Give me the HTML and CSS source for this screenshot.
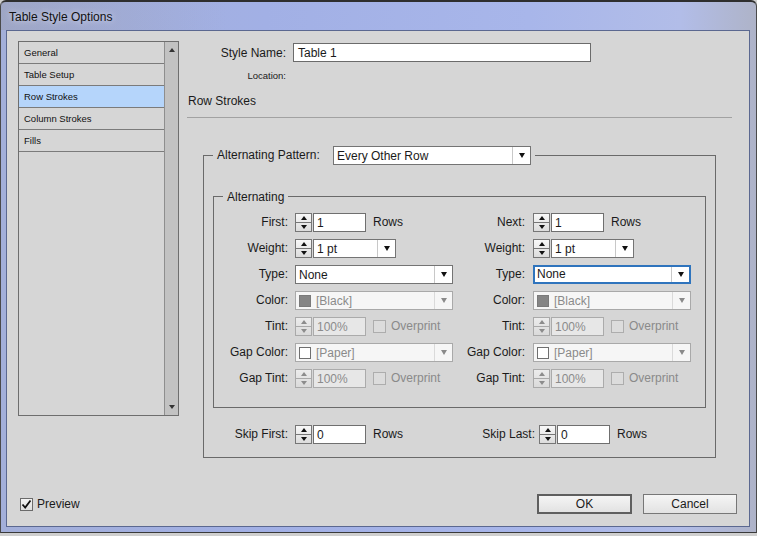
FILE: index.html
```html
<!DOCTYPE html>
<html>
<head>
<meta charset="utf-8">
<title>Table Style Options</title>
<link rel="stylesheet" href="styles.css">
</head>
<body>
<div class="window">
  <div class="titlebar"><span class="title">Table Style Options</span></div>
  <div class="client">
    <div class="main">
      <div class="list">
        <ul class="items">
          <li>General</li>
          <li>Table Setup</li>
          <li class="sel">Row Strokes</li>
          <li>Column Strokes</li>
          <li>Fills</li>
        </ul>
        <div class="scrollbar"><span class="sb-up"></span><span class="sb-down"></span></div>
      </div>
      <div class="panel">
        <div class="name-row">
          <span class="plabel">Style Name:</span>
          <div class="textbox name-box">Table 1</div>
        </div>
        <div class="loc-row"><span class="plabel small">Location:</span></div>
        <div class="section-title">Row Strokes</div>
        <div class="rule"></div>
        <fieldset class="group outer">
          <legend><span class="legend-flex"><span class="pat-label">Alternating Pattern:</span>
            <span class="dd pat-dd"><span class="val">Every Other Row</span><span class="arr"><i class="caret"></i></span></span></span></legend>
          <fieldset class="group inner">
            <legend>Alternating</legend>
            <div class="cols">
              <span class="flabel">First:</span>
              <span class="ctl"><span class="spin"><i class="up"></i><i class="dn"></i></span><span class="tb">1</span><span class="unit">Rows</span></span>
              <span class="flabel r">Next:</span>
              <span class="ctl"><span class="spin"><i class="up"></i><i class="dn"></i></span><span class="tb">1</span><span class="unit">Rows</span></span>

              <span class="flabel">Weight:</span>
              <span class="ctl"><span class="spin"><i class="up"></i><i class="dn"></i></span><span class="dd wdd"><span class="val">1 pt</span><span class="arr"><i class="caret"></i></span></span></span>
              <span class="flabel r">Weight:</span>
              <span class="ctl"><span class="spin"><i class="up"></i><i class="dn"></i></span><span class="dd wdd"><span class="val">1 pt</span><span class="arr"><i class="caret"></i></span></span></span>

              <span class="flabel">Type:</span>
              <span class="ctl"><span class="dd full"><span class="val">None</span><span class="arr"><i class="caret"></i></span></span></span>
              <span class="flabel r">Type:</span>
              <span class="ctl"><span class="dd full focus"><span class="val">None</span><span class="arr"><i class="caret"></i></span></span></span>

              <span class="flabel">Color:</span>
              <span class="ctl"><span class="dd full dis"><span class="val"><i class="sw black"></i>[Black]</span><span class="arr"><i class="caret"></i></span></span></span>
              <span class="flabel r">Color:</span>
              <span class="ctl"><span class="dd full dis"><span class="val"><i class="sw black"></i>[Black]</span><span class="arr"><i class="caret"></i></span></span></span>

              <span class="flabel">Tint:</span>
              <span class="ctl"><span class="spin dis"><i class="up"></i><i class="dn"></i></span><span class="tb dis">100%</span><span class="cb dis"></span><span class="cbl dis">Overprint</span></span>
              <span class="flabel r">Tint:</span>
              <span class="ctl"><span class="spin dis"><i class="up"></i><i class="dn"></i></span><span class="tb dis">100%</span><span class="cb dis"></span><span class="cbl dis">Overprint</span></span>

              <span class="flabel">Gap Color:</span>
              <span class="ctl"><span class="dd full dis"><span class="val"><i class="sw paper"></i>[Paper]</span><span class="arr"><i class="caret"></i></span></span></span>
              <span class="flabel r">Gap Color:</span>
              <span class="ctl"><span class="dd full dis"><span class="val"><i class="sw paper"></i>[Paper]</span><span class="arr"><i class="caret"></i></span></span></span>

              <span class="flabel">Gap Tint:</span>
              <span class="ctl"><span class="spin dis"><i class="up"></i><i class="dn"></i></span><span class="tb dis">100%</span><span class="cb dis"></span><span class="cbl dis">Overprint</span></span>
              <span class="flabel r">Gap Tint:</span>
              <span class="ctl"><span class="spin dis"><i class="up"></i><i class="dn"></i></span><span class="tb dis">100%</span><span class="cb dis"></span><span class="cbl dis">Overprint</span></span>
            </div>
          </fieldset>
          <div class="skip-row">
            <div class="skip-half">
              <span class="flabel">Skip First:</span>
              <span class="spin"><i class="up"></i><i class="dn"></i></span><span class="tb">0</span><span class="unit">Rows</span>
            </div>
            <div class="skip-half">
              <span class="flabel last">Skip Last:</span>
              <span class="spin"><i class="up"></i><i class="dn"></i></span><span class="tb">0</span><span class="unit">Rows</span>
            </div>
          </div>
        </fieldset>
      </div>
    </div>
    <div class="footer">
      <span class="preview-cb">
        <svg width="13" height="13" viewBox="0 0 13 13"><path d="M2.5 6.5 L5.2 9.5 L10.5 2.5" fill="none" stroke="#111" stroke-width="1.8"/></svg>
      </span>
      <span class="preview-label">Preview</span>
      <span class="spacer"></span>
      <span class="btn default">OK</span>
      <span class="btn">Cancel</span>
    </div>
  </div>
</div>
</body>
</html>
```
FILE: styles.css
```css
html, body {
  margin: 0;
  padding: 0;
}
body {
  background: #cfcfcf;
  font-family: "Liberation Sans", Arial, sans-serif;
  font-size: 12px;
  color: #1a1a1a;
}
.window {
  width: 757px;
  height: 533px;
  box-sizing: border-box;
  padding: 0 6px 5px 5px;
  background: linear-gradient(to right, #a3afd9 0%, #a2b0e5 35%, #a8b6ea 70%, #b2bde8 90%, #aeb3c8 100%);
  border-top: 2px solid #2e2e2e;
  border-left: 1px solid #4a4a4a;
  border-right: 1px solid #4a4a4a;
  border-bottom: 1px solid #3a3a3a;
  border-radius: 6px 6px 0 0;
  display: flex;
  flex-direction: column;
}
.titlebar {
  height: 28px;
  display: flex;
  align-items: center;
  padding: 2px 0 0 8px;
  box-sizing: border-box;
  background: linear-gradient(to right, rgba(150, 150, 160, 0.35) 0%, rgba(150, 150, 160, 0) 30%);
  margin: 0 -5px 0 -5px;
}
.title {
  font-family: "Liberation Sans", Arial, sans-serif;
  font-size: 12px;
  color: #111;
  text-shadow: 0 0 6px rgba(240, 240, 250, 0.9);
}
.client {
  height: 498px;
  box-sizing: border-box;
  border: 1px solid #5b6890;
  background: #d6d6d6;
  padding: 10px 16px 12px 11px;
  display: flex;
  flex-direction: column;
}
.main {
  display: flex;
  gap: 8px;
}

/* list */
.list {
  width: 161px;
  height: 375px;
  box-sizing: border-box;
  border: 1px solid #6e6e6e;
  display: flex;
}
.items {
  flex: 1;
  list-style: none;
  margin: 0;
  padding: 0;
}
.items li {
  height: 21px;
  line-height: 21px;
  border-bottom: 1px solid #7b7b7b;
  padding-left: 5px;
  font-size: 9.5px;
  color: #111;
}
.items li.sel {
  background: #b5d5fb;
}
.scrollbar {
  width: 14px;
  box-sizing: border-box;
  border-left: 1px solid #8e8e8e;
  background: #c2c2c2;
  display: flex;
  flex-direction: column;
  justify-content: space-between;
  align-items: center;
  padding: 6px 0 6px 0;
}
.sb-up {
  width: 0;
  height: 0;
  border-left: 3.5px solid transparent;
  border-right: 3.5px solid transparent;
  border-bottom: 4px solid #333;
}
.sb-down {
  width: 0;
  height: 0;
  border-left: 3.5px solid transparent;
  border-right: 3.5px solid transparent;
  border-top: 4px solid #333;
}

/* right panel */
.panel {
  width: 545px;
}
.name-row {
  display: flex;
  align-items: center;
  height: 19px;
  margin-top: 2px;
}
.plabel {
  display: inline-block;
  width: 99px;
  text-align: right;
  padding-top: 1px;
}
.plabel.small {
  font-size: 9.5px;
}
.textbox {
  box-sizing: border-box;
  height: 19px;
  line-height: 18px;
  border: 1px solid #6b6b6b;
  background: #fff;
  padding-left: 4px;
}
.name-box {
  width: 298px;
  margin-left: 7px;
}
.loc-row {
  height: 14px;
  line-height: 14px;
  margin-top: 6px;
}
.section-title {
  margin-top: 12px;
  line-height: 15px;
  padding-left: 1px;
}
.rule {
  margin-top: 8px;
  height: 1px;
  background: #a2a2a2;
}

/* group boxes */
.group {
  border: 1px solid #6a6a6a;
  min-width: 0;
}
.group legend {
  padding: 0 4px;
  margin-left: 9px;
}
.outer {
  margin: 28px 16px 0 16px;
  padding: 0 0 13px 0;
}
.legend-flex {
  display: flex;
  align-items: center;
  height: 19px;
}
.pat-label {
  width: 116px;
}
.pat-dd {
  width: 198px;
}
.pat-dd .val {
  padding-top: 0;
}
.inner {
  margin: 25px 9px 0 9px;
  padding: 9px 0 19px 0;
}
.inner legend {
  line-height: 14px;
}

.cols {
  display: grid;
  grid-template-columns: 81px 158px 80px 158px;
  grid-auto-rows: 19px;
  row-gap: 7px;
}
.flabel {
  text-align: right;
  padding-right: 7px;
  line-height: 19px;
}
.flabel.r {
  padding-right: 8px;
}
.ctl {
  display: flex;
  align-items: center;
  height: 19px;
}

/* spinner */
.spin {
  width: 17px;
  height: 19px;
  box-sizing: border-box;
  border: 1px solid #767676;
  background: linear-gradient(#f8f8f8, #dcdcdc);
  display: flex;
  flex-direction: column;
  margin-right: 1px;
  flex: none;
}
.spin i {
  flex: 1;
  display: flex;
  align-items: center;
  justify-content: center;
}
.spin i + i {
  border-top: 1px solid #767676;
}
.spin i::after {
  content: "";
  width: 0;
  height: 0;
  border-left: 3.5px solid transparent;
  border-right: 3.5px solid transparent;
}
.spin .up::after {
  border-bottom: 4px solid #111;
}
.spin .dn::after {
  border-top: 4px solid #111;
}
.spin.dis {
  border-color: #a9a9a9;
  background: linear-gradient(#ececec, #dadada);
}
.spin.dis i + i {
  border-top-color: #a9a9a9;
}
.spin.dis .up::after {
  border-bottom-color: #8c8c8c;
}
.spin.dis .dn::after {
  border-top-color: #8c8c8c;
}

/* text box */
.tb {
  width: 53px;
  height: 19px;
  box-sizing: border-box;
  border: 1px solid #6f6f6f;
  background: #fff;
  padding-left: 3px;
  line-height: 18px;
  flex: none;
}
.tb.dis {
  border-color: #ababab;
  background: #e7e7e7;
  color: #8b8b8b;
}
.unit {
  margin-left: 7px;
}
.cb {
  width: 13px;
  height: 13px;
  box-sizing: border-box;
  margin-left: 7px;
  border: 1px solid #adadad;
  background: #dcdcdc;
  flex: none;
}
.cbl {
  margin-left: 5px;
}
.cbl.dis {
  color: #8a8a8a;
}

/* dropdown */
.dd {
  display: flex;
  align-items: stretch;
  height: 19px;
  box-sizing: border-box;
  border: 1px solid #747474;
  background: #fff;
  flex: none;
}
.dd .val {
  flex: 1;
  display: flex;
  align-items: center;
  padding-left: 3px;
  padding-top: 1px;
  white-space: nowrap;
}
.dd .arr {
  width: 17px;
  border-left: 1px solid #c8c8c8;
  display: flex;
  align-items: center;
  justify-content: center;
}
.caret {
  width: 0;
  height: 0;
  border-left: 3.5px solid transparent;
  border-right: 3.5px solid transparent;
  border-top: 5px solid #111;
}
.wdd {
  width: 83px;
}
.full {
  width: 158px;
}
.dd.focus {
  border: 2px solid #2f74bd;
}
.dd.focus .val {
  padding-left: 2px;
  padding-top: 0;
}
.dd.dis {
  border-color: #a9a9a9;
  background: #f6f6f6;
  color: #8a8a8a;
}
.dd.dis .arr {
  border-left-color: #dadada;
}
.dd.dis .caret {
  border-top-color: #8a8a8a;
}
.sw {
  width: 12px;
  height: 12px;
  box-sizing: border-box;
  margin-right: 5px;
  flex: none;
}
.sw.black {
  background: #858585;
  border: 1px solid #7a7a7a;
}
.sw.paper {
  background: #fff;
  border: 1px solid #6f6f6f;
}

/* skip row */
.skip-row {
  display: flex;
  margin-top: 17px;
  padding-left: 10px;
  height: 19px;
}
.skip-half {
  display: flex;
  align-items: center;
}
.skip-half:first-child {
  width: 239px;
}
.skip-half .flabel {
  width: 81px;
  box-sizing: border-box;
}
.skip-half .flabel.last {
  width: 86px;
  padding-right: 4px;
}

/* footer */
.footer {
  margin-top: auto;
  height: 20px;
  display: flex;
  align-items: center;
  margin-right: -4px;
}
.preview-cb {
  width: 13px;
  height: 13px;
  box-sizing: border-box;
  margin-left: 2px;
  border: 1px solid #6a6a6a;
  background: linear-gradient(#f4f4f4, #dedede);
  display: flex;
}
.preview-cb svg {
  margin: -1px;
}
.preview-label {
  margin-left: 4px;
}
.spacer {
  flex: 1;
}
.btn {
  width: 94px;
  height: 20px;
  box-sizing: border-box;
  border: 1px solid #777;
  background: linear-gradient(#f5f5f5, #e2e2e2);
  display: flex;
  align-items: center;
  justify-content: center;
}
.btn.default {
  width: 95px;
  border: 2px solid #5f5f5f;
  margin-right: 11px;
}
```
